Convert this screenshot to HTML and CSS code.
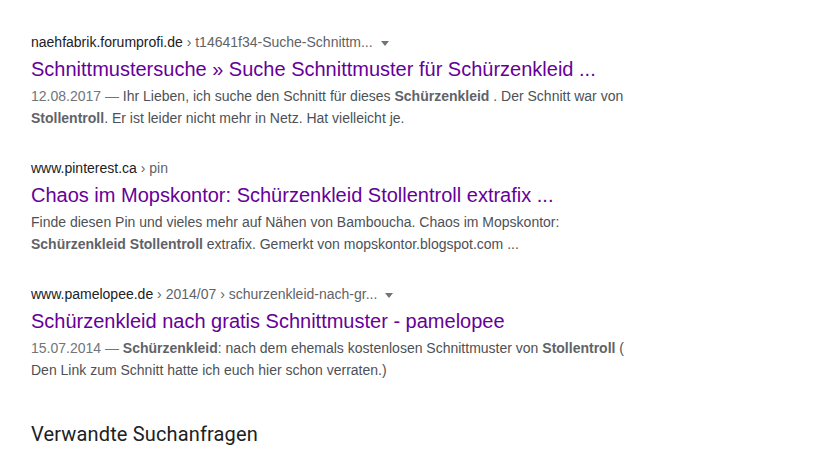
FILE: index.html
```html
<!DOCTYPE html>
<html lang="de">
<head>
  <meta charset="UTF-8">
  <title>Schürzenkleid Stollentroll - Suche</title>
  <link rel="stylesheet" href="styles.css">
</head>
<body>

  <div class="results">

    <div class="result">
      <div class="crumbs">
        <span class="site">naehfabrik.forumprofi.de</span>
        <span class="path"> › t14641f34-Suche-Schnittm...</span>
        <span class="more"></span>
      </div>
      <h3 class="title"><a href="#">Schnittmustersuche » Suche Schnittmuster für Schürzenkleid ...</a></h3>
      <div class="snippet">
        <span class="date">12.08.2017 —</span> Ihr Lieben, ich suche den Schnitt für dieses <b>Schürzenkleid</b> . Der Schnitt war von <b>Stollentroll</b>. Er ist leider nicht mehr in Netz. Hat vielleicht je.
      </div>
    </div>

    <div class="result">
      <div class="crumbs">
        <span class="site">www.pinterest.ca</span>
        <span class="path"> › pin</span>
      </div>
      <h3 class="title"><a href="#">Chaos im Mopskontor: Schürzenkleid Stollentroll extrafix ...</a></h3>
      <div class="snippet">
        Finde diesen Pin und vieles mehr auf Nähen von Bamboucha. Chaos im Mopskontor: <b>Schürzenkleid Stollentroll</b> extrafix. Gemerkt von mopskontor.blogspot.com ...
      </div>
    </div>

    <div class="result">
      <div class="crumbs">
        <span class="site">www.pamelopee.de</span>
        <span class="path"> › 2014/07 › schurzenkleid-nach-gr...</span>
        <span class="more"></span>
      </div>
      <h3 class="title"><a href="#">Schürzenkleid nach gratis Schnittmuster - pamelopee</a></h3>
      <div class="snippet">
        <span class="date">15.07.2014 —</span> <b>Schürzenkleid</b>: nach dem ehemals kostenlosen Schnittmuster von <b>Stollentroll</b> ( Den Link zum Schnitt hatte ich euch hier schon verraten.)
      </div>
    </div>

  </div>

  <h2 class="related">Verwandte Suchanfragen</h2>

</body>
</html>
```

FILE: styles.css
```css
body {
  margin: 0;
  padding: 33px 0 0 31px;
  font-family: 'Liberation Sans', Arial, sans-serif;
  background: #fff;
  color: #4d5156;
}

.results {
  width: 600px;
}

.result {
  margin-bottom: 30px;
}

.crumbs {
  font-size: 14px;
  line-height: 18px;
  color: #202124;
  white-space: nowrap;
}

.path {
  color: #5f6368;
}

.more {
  display: inline-block;
  width: 0;
  height: 0;
  margin-left: 4px;
  vertical-align: middle;
  border-left: 4px solid transparent;
  border-right: 4px solid transparent;
  border-top: 5px solid #70757a;
}

.title {
  margin: 0 0 3px;
  padding-top: 5px;
  font-size: 20px;
  font-weight: normal;
  line-height: 26px;
  white-space: nowrap;
}

.title a {
  color: #660099;
  text-decoration: none;
}

.title a:hover {
  text-decoration: underline;
}

.snippet {
  font-size: 14px;
  line-height: 22px;
  color: #4d5156;
}

.snippet b {
  color: #5f6368;
}

.date {
  color: #70757a;
}

.related {
  margin: 40px 0 0;
  font-family: Roboto, Arial, sans-serif;
  font-size: 20px;
  font-weight: normal;
  line-height: 26px;
  letter-spacing: 0.15px;
  color: #202124;
}
```
